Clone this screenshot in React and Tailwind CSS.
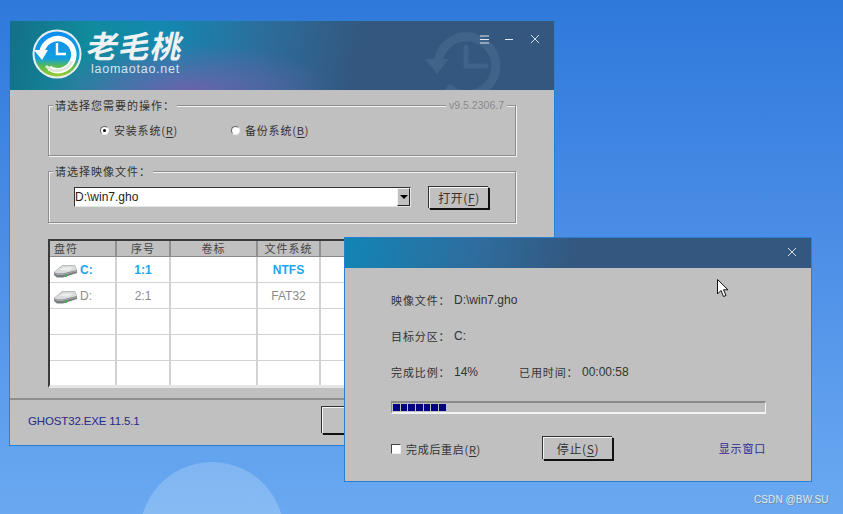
import React from 'react';

const CN = { fontFamily: '"Noto Sans CJK SC", "Liberation Sans", sans-serif' };
const UI = { fontFamily: '"Liberation Sans", "Noto Sans CJK SC", sans-serif' };

// Logo del reloj con flecha
const ClockLogo = () => (
  <svg width="50" height="50" viewBox="0 0 50 50" className="shrink-0">
    <defs>
      <linearGradient id="ring" x1="0" y1="0" x2="0" y2="1">
        <stop offset="0" stopColor="#0f8df0" />
        <stop offset="0.6" stopColor="#11a0e0" />
        <stop offset="0.78" stopColor="#5dbb4c" />
        <stop offset="1" stopColor="#9ccc2c" />
      </linearGradient>
    </defs>
    <circle cx="25" cy="25" r="24.5" fill="#e8eef0" />
    <circle cx="25" cy="25" r="22.5" fill="url(#ring)" />
    <path d="M10 23 A16 16 0 1 1 17 39" fill="none" stroke="#fff" strokeWidth="5.5" />
    <path d="M2 21 L16 21 L10 31 Z" fill="#fff" />
    <path d="M25 14 V25 H34" fill="none" stroke="#fff" strokeWidth="2.4" />
    <path d="M14 37 A16 16 0 0 0 40 32" fill="none" stroke="#dfe8d8" strokeWidth="3" />
  </svg>
);

// Reloj de fondo en la cabecera
const ClockWatermark = () => (
  <svg width="84" height="72" viewBox="0 0 84 72" className="absolute left-[413px] top-[8px]">
    <path d="M15 33 A29 29 0 1 1 24 58" fill="none" stroke="#3f6389" strokeWidth="9" />
    <path d="M2 30 L26 30 L14 45 Z" fill="#3f6389" />
    <path d="M43 18 V37 H63" fill="none" stroke="#3f6389" strokeWidth="5" strokeLinecap="round" />
  </svg>
);

const DriveIcon = () => (
  <svg width="25" height="14" viewBox="0 0 25 14" className="mt-[7px] shrink-0">
    <path d="M1 8 L9 1.5 H22 L24 6 V9 L10 13.5 H4 L1 11 Z" fill="#777c7e" />
    <path d="M1 8 L9 2 H22 L24 6 L10 9.5 H4 Z" fill="#d8dadb" />
    <path d="M6 6 L11 3.5 H20 L16 6.5 Z" fill="#eceeee" />
    <path d="M1 8.5 L4 10 H10 L24 6.5 V7.5 L10 11 H4 L1 9.5 Z" fill="#a6aaac" />
    <rect x="12" y="10" width="2" height="3" fill="#42b649" />
  </svg>
);

const CloseIcon = () => (
  <svg width="10" height="10" viewBox="0 0 10 10" stroke="#d5dfe9" strokeWidth="1">
    <path d="M1 1 L9 9 M9 1 L1 9" />
  </svg>
);

const Radio = ({ checked }) => (
  <span className="flex h-[9px] w-[9px] items-center justify-center rounded-full border border-[#666] border-r-[#eee] border-b-[#eee] bg-white">
    {checked && <span className="h-[3px] w-[3px] rounded-full bg-black" />}
  </span>
);

const HotKey = ({ children }) => <span className="underline underline-offset-2">{children}</span>;

const Group = ({ title, className, children }) => (
  <div className={`relative mx-[38px] border border-[#8e8e8e] shadow-[inset_1px_1px_0_#f2f2f2,1px_1px_0_#f2f2f2] ${className}`}>
    <span className="absolute left-[4px] top-[-8px] bg-[#c0c0c0] px-[2px] text-[11px] leading-[15px] tracking-[1px] text-[#333]" style={CN}>
      {title}
    </span>
    {children}
  </div>
);

const Button = ({ className, children }) => (
  <div className={`flex items-center justify-center border border-t-[#f4f4f4] border-l-[#f4f4f4] border-r-[#111] border-b-[#111] bg-[#c0c0c0] text-[12px] tracking-[0.6px] text-[#333] shadow-[1px_1px_0_#111,-1px_-1px_0_#333] ${className}`} style={CN}>
    <span>{children}</span>
  </div>
);

const columns = 'grid grid-cols-[67px_54px_87px_63px_1fr]';

const headers = ['盘符', '序号', '卷标', '文件系统', ''];

const rows = [
  { drive: 'C:', num: '1:1', label: '', fs: 'NTFS', active: true },
  { drive: 'D:', num: '2:1', label: '', fs: 'FAT32', active: false },
  {}, {}, {},
];

const PartitionTable = () => (
  <div className="mx-[38px] mt-[16px] h-[149px] overflow-hidden border-l-2 border-t-2 border-[#3a3a3a] border-b-[3px] border-b-[#e6e6e6]">
    <div className={`${columns} h-[16px] border-b border-[#8a8a8a] text-[11px] leading-[15px] tracking-[1px] text-[#444]`} style={CN}>
      {headers.map((h, i) => (
        <div key={i} className={`border-r-2 border-[#909090] ${i === 0 ? 'pl-[4px]' : 'text-center'}`}>{h}</div>
      ))}
    </div>
    {rows.map((r, i) => (
      <div key={i} className={`${columns} h-[26px] border-b border-[#d2d2d2] bg-white text-[12px] ${r.active ? 'font-bold text-[#17a6f6]' : 'text-[#8b8b8b]'}`} style={UI}>
        <div className="flex items-start border-r-2 border-[#d2d2d2] pl-[3px]">
          {r.drive && <DriveIcon />}
          {r.drive && <span className="ml-[2px] mt-[5px] leading-[16px]">{r.drive}</span>}
        </div>
        <div className="flex items-center justify-center border-r-2 border-[#d2d2d2]">{r.num}</div>
        <div className="border-r-2 border-[#d2d2d2]" />
        <div className="flex items-center justify-center border-r-2 border-[#d2d2d2]">{r.fs}</div>
        <div />
      </div>
    ))}
  </div>
);

const MainWindow = () => (
  <div className="absolute left-[9px] top-[20px] h-[426px] w-[546px] border border-[#2b7fd0] bg-[#c0c0c0]">
    <div className="relative flex h-[69px] items-start overflow-hidden bg-[radial-gradient(ellipse_150px_50px_at_178px_72px,#6e62aa_0%,rgba(110,98,170,0)_100%),linear-gradient(100deg,#146f88_0%,#118a9c_14%,#1488b0_28%,#2c6d9c_46%,#33577f_64%,#33577f_100%)]">
      <ClockWatermark />
      <div className="ml-[22px] mt-[8px]"><ClockLogo /></div>
      <div className="ml-[6px] mt-[5px] flex flex-col">
        <span className="-skew-x-12 text-[31px] font-bold leading-[37px] tracking-[1px] text-[#eef2f2]" style={CN}>老毛桃</span>
        <span className="-mt-[2px] ml-[3px] text-[12.5px] leading-[16px] tracking-[0.75px] text-[#d8e4ec]" style={UI}>laomaotao.net</span>
      </div>
      <svg width="9" height="9" viewBox="0 0 9 9" stroke="#e2e8ef" className="absolute left-[470px] top-[14px]">
        <path d="M0 1 H9 M0 4.5 H9 M0 8 H9" />
      </svg>
      <div className="absolute left-[495px] top-[18px] h-px w-[8px] bg-[#e2e8ef]" />
      <div className="absolute left-[520px] top-[13px]"><CloseIcon /></div>
    </div>

    <div className="pt-[15px]">
      <Group title="请选择您需要的操作：" className="h-[51px]">
        <span className="absolute right-[8px] top-[-8px] bg-[#c0c0c0] px-[3px] text-[10.5px] leading-[15px] text-[#8a8a8a]" style={UI}>v9.5.2306.7</span>
        <div className="flex pt-[16px] pl-[51px] text-[11px] leading-[16px] tracking-[0.8px] text-[#333]" style={CN}>
          <div className="flex w-[131px] items-center gap-[5px]"><Radio checked /><span>安装系统(<HotKey>R</HotKey>)</span></div>
          <div className="flex items-center gap-[5px]"><Radio /><span>备份系统(<HotKey>B</HotKey>)</span></div>
        </div>
      </Group>
      <Group title="请选择映像文件：" className="mt-[15px] h-[52px]">
        <div className="flex pt-[15px] pl-[25px]">
          <div className="flex h-[20px] w-[337px] items-center justify-between border border-t-[#333] border-l-[#333] border-r-[#e5e5e5] border-b-[#e5e5e5] bg-white text-[12px] text-[#222]" style={UI}>
            D:\win7.gho
            <div className="flex h-[18px] w-[13px] items-center justify-center border border-t-[#f4f4f4] border-l-[#f4f4f4] border-r-[#222] border-b-[#222] bg-[#c0c0c0]">
              <span className="h-0 w-0 border-x-[4px] border-t-[4px] border-x-transparent border-t-black" />
            </div>
          </div>
          <Button className="ml-[18px] h-[22px] w-[60px]">打开(<HotKey>F</HotKey>)</Button>
        </div>
      </Group>
      <PartitionTable />
    </div>

    <div className="mt-[10px] flex h-[47px] items-start border-t-2 border-t-[#8f8f8f] pl-[18px]">
      <span className="mt-[13px] w-[294px] text-[11.5px] leading-[16px] tracking-[-0.15px] text-[#28288c]" style={UI}>GHOST32.EXE 11.5.1</span>
      <Button className="mt-[7px] h-[27px] w-[70px]">开始</Button>
    </div>
  </div>
);

const InfoRow = ({ label, value, className }) => (
  <div className={`flex h-[16px] items-center text-[11px] leading-[16px] text-[#333] ${className}`}>
    <span className="w-[63px] tracking-[0.9px]" style={CN}>{label}</span>
    <span className="text-[12px]" style={UI}>{value}</span>
  </div>
);

const ProgressDialog = () => (
  <div className="absolute left-[344px] top-[237px] h-[245px] w-[468px] border border-[#2b7fd0] bg-[#c0c0c0]">
    <div className="relative h-[30px] bg-[linear-gradient(100deg,#1185b5_0%,#2e6d9e_28%,#33577f_50%,#33577f_100%)]">
      <div className="absolute left-[442px] top-[9px]"><CloseIcon /></div>
    </div>
    <div className="px-[46px] pt-[24px]">
      <InfoRow label="映像文件：" value="D:\win7.gho" />
      <InfoRow label="目标分区：" value="C:" className="mt-[20px]" />
      <div className="mt-[20px] flex">
        <InfoRow label="完成比例：" value="14%" className="w-[128px]" />
        <InfoRow label="已用时间：" value="00:00:58" />
      </div>
      <div className="mt-[21px] flex h-[13px] w-[375px] gap-px border-t-2 border-l border-r border-b-2 border-t-[#8a8a8a] border-l-[#8a8a8a] border-r-[#f2f2f2] border-b-[#f2f2f2] px-px py-px">
        {[0, 1, 2, 3, 4, 5, 6].map((i) => (
          <span key={i} className="h-full w-[6.7px] bg-[#000080]" />
        ))}
      </div>
      <div className="mt-[23px] flex items-center">
        <span className="h-[10px] w-[10px] border border-t-[#444] border-l-[#444] border-r-[#eee] border-b-[#eee] bg-white" />
        <span className="ml-[5px] w-[137px] text-[11px] leading-[16px] tracking-[0.7px] text-[#333]" style={CN}>完成后重启(<HotKey>R</HotKey>)</span>
        <Button className="h-[23px] w-[70px]">停止(<HotKey>S</HotKey>)</Button>
        <span className="ml-auto -mr-[1px] text-[11px] tracking-[0.8px] text-[#2a2a90]" style={CN}>显示窗口</span>
      </div>
    </div>
  </div>
);

const App = () => (
  <div className="relative h-[514px] w-[843px] overflow-hidden bg-[linear-gradient(180deg,#2f79db_0%,#4a8de6_45%,#6aa9f1_100%)]">
    <div className="absolute left-[140px] top-[462px] h-[144px] w-[144px] rounded-full bg-[linear-gradient(180deg,#7fb5f2,#95c6f8)]" />
    <MainWindow />
    <ProgressDialog />
    <svg width="12" height="20" viewBox="0 0 12 20" className="absolute left-[717px] top-[279px]">
      <path d="M0.5 0.5 V15 L4 11.5 L6.5 17.5 L9 16.5 L6.5 10.8 H11 Z" fill="#fff" stroke="#111" strokeWidth="1" />
    </svg>
    <span className="absolute left-[754px] top-[492px] text-[10px] leading-[15px] tracking-[0.1px] text-[#dfe9f6] [text-shadow:1px_1px_0_#7b8aa0]" style={UI}>CSDN @BW.SU</span>
  </div>
);

export default App;
